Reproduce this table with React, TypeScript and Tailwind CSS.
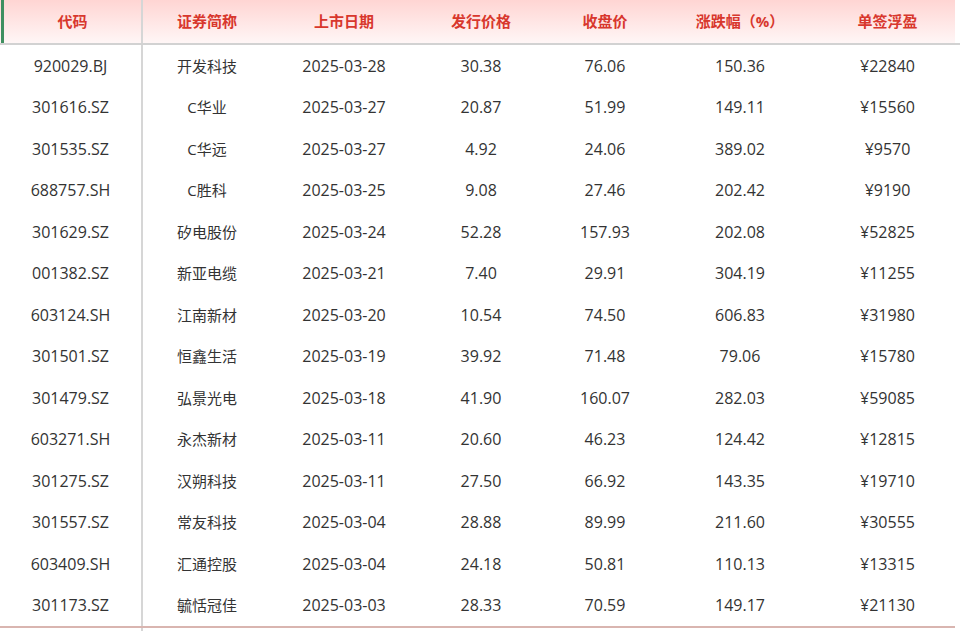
const rows = [
  ["920029.BJ", "开发科技", "2025-03-28", "30.38", "76.06", "150.36", "¥22840"],
  ["301616.SZ", "C华业", "2025-03-27", "20.87", "51.99", "149.11", "¥15560"],
  ["301535.SZ", "C华远", "2025-03-27", "4.92", "24.06", "389.02", "¥9570"],
  ["688757.SH", "C胜科", "2025-03-25", "9.08", "27.46", "202.42", "¥9190"],
  ["301629.SZ", "矽电股份", "2025-03-24", "52.28", "157.93", "202.08", "¥52825"],
  ["001382.SZ", "新亚电缆", "2025-03-21", "7.40", "29.91", "304.19", "¥11255"],
  ["603124.SH", "江南新材", "2025-03-20", "10.54", "74.50", "606.83", "¥31980"],
  ["301501.SZ", "恒鑫生活", "2025-03-19", "39.92", "71.48", "79.06", "¥15780"],
  ["301479.SZ", "弘景光电", "2025-03-18", "41.90", "160.07", "282.03", "¥59085"],
  ["603271.SH", "永杰新材", "2025-03-11", "20.60", "46.23", "124.42", "¥12815"],
  ["301275.SZ", "汉朔科技", "2025-03-11", "27.50", "66.92", "143.35", "¥19710"],
  ["301557.SZ", "常友科技", "2025-03-04", "28.88", "89.99", "211.60", "¥30555"],
  ["603409.SH", "汇通控股", "2025-03-04", "24.18", "50.81", "110.13", "¥13315"],
  ["301173.SZ", "毓恬冠佳", "2025-03-03", "28.33", "70.59", "149.17", "¥21130"],
];

const headers = ["代码", "证券简称", "上市日期", "发行价格", "收盘价", "涨跌幅（%）", "单签浮盈"];

const cols = "grid grid-cols-[143px_128px_146px_128px_120px_150px_145px]";

export default function App() {
  return (
    <div
      className="w-[960px] h-[631px] bg-white overflow-hidden text-[#333]"
      style={{ fontFamily: '"Open Sans", "Noto Sans CJK SC", sans-serif' }}
    >
      <div
        className={`${cols} h-[45px] border-b-2 border-[#d2d2d2] bg-[linear-gradient(#ffd5d3,#fff6f6)] bg-no-repeat bg-[length:955px_100%]`}
      >
        {headers.map((h, i) => (
          <div
            key={h}
            className={`flex items-center justify-center text-[15px] font-bold text-[#d8372d] ${
              i === 0 ? "border-r-2 border-[#d6d6d6] border-l-[3px] border-l-[#3f8f60] ml-[1px]" : ""
            }`}
          >
            {h}
          </div>
        ))}
      </div>
      <div className="w-[955px] border-b-2 border-[#d9b5b0]">
        {rows.map((r) => (
          <div key={r[0]} className={`${cols} h-[41.5px]`}>
            {r.map((c, i) => (
              <div
                key={i}
                className={`flex items-center justify-center ${
                  i === 1 ? "text-[15px]" : "text-[16px]"
                } ${i === 0 ? "border-r-2 border-[#d6d6d6]" : ""}`}
              >
                {c}
              </div>
            ))}
          </div>
        ))}
      </div>
      <div className="w-[143px] h-[10px] border-r-2 border-[#d6d6d6]" />
    </div>
  );
}
